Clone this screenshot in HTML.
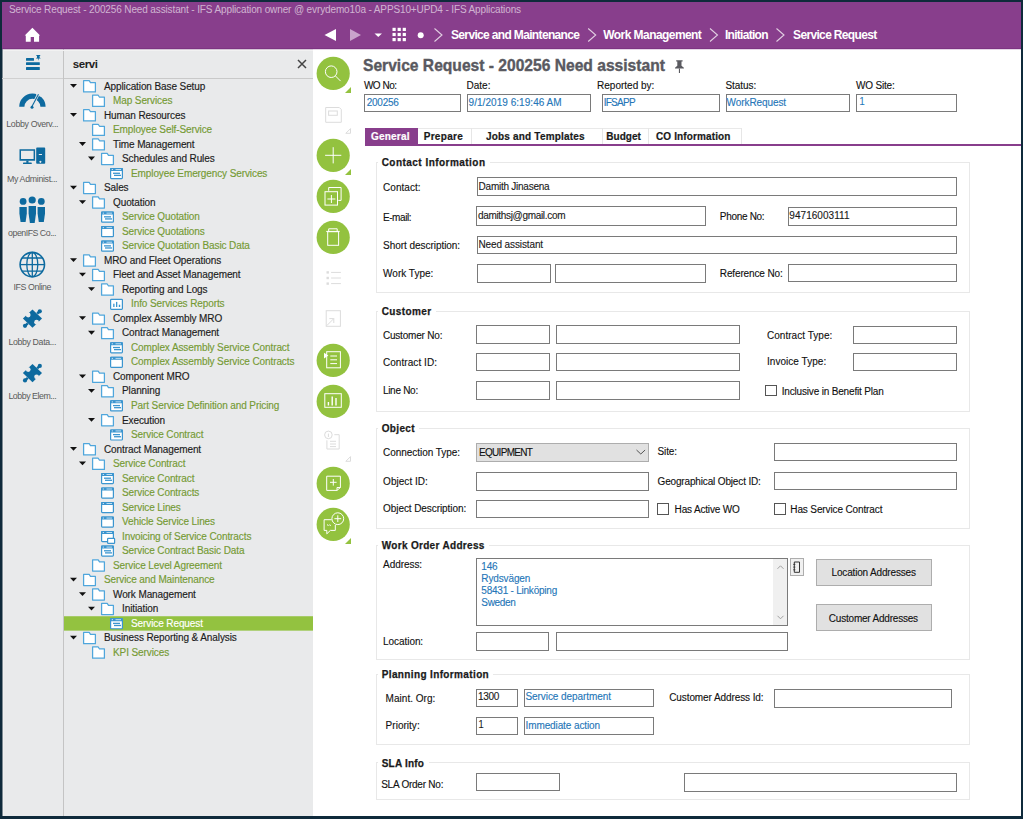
<!DOCTYPE html>
<html><head><meta charset="utf-8"><title>IFS</title>
<style>
html,body{margin:0;padding:0;}
body{width:1023px;height:819px;overflow:hidden;background:#0f2a3b;position:relative;font-family:"Liberation Sans", sans-serif;}
#app{position:absolute;left:2px;top:2px;width:1019px;height:814px;background:#fff;}
.t{position:absolute;white-space:nowrap;}
.r{position:absolute;}
</style></head><body>
<div id="app"></div>
<div class="r" style="left:2px;top:2px;width:1019px;height:47px;background:#883e8c"></div>
<div class="r" style="left:2px;top:48px;width:1019px;height:1px;background:#7d3482"></div>
<div class="t" style="left:9px;top:4.73px;font-size:10px;line-height:10px;color:rgba(255,255,255,0.62);font-weight:normal;letter-spacing:-0.125px;">Service Request - 200256 Need assistant - IFS Application owner @ evrydemo10a - APPS10+UPD4 - IFS Applications</div>
<svg class="r" style="left:0;top:0" width="1023" height="60" viewBox="0 0 1023 60"><path d="M24.7 35.6 L32.4 27.8 L40.1 35.6 L39.1 35.6 L39.1 41.8 L34 41.8 L34 37 L30.7 37 L30.7 41.8 L25.8 41.8 L25.8 35.6 Z" fill="#fff"/><path d="M324.5 35 L336 29 L336 41 Z" fill="#fff"/><path d="M350 29 L361 35 L350 41 Z" fill="#c9a3cc"/><path d="M374.5 33.6 L382 33.6 L378.25 37 Z" fill="#fff"/><rect x="392.5" y="27.8" width="3.2" height="3.2" fill="#fff"/><rect x="392.5" y="32.9" width="3.2" height="3.2" fill="#fff"/><rect x="392.5" y="38.0" width="3.2" height="3.2" fill="#fff"/><rect x="397.6" y="27.8" width="3.2" height="3.2" fill="#fff"/><rect x="397.6" y="32.9" width="3.2" height="3.2" fill="#fff"/><rect x="397.6" y="38.0" width="3.2" height="3.2" fill="#fff"/><rect x="402.7" y="27.8" width="3.2" height="3.2" fill="#fff"/><rect x="402.7" y="32.9" width="3.2" height="3.2" fill="#fff"/><rect x="402.7" y="38.0" width="3.2" height="3.2" fill="#fff"/><circle cx="420.7" cy="35.3" r="3" fill="#fff"/><path d="M434.5 28.5 L442.0 35 L434.5 41.5" fill="none" stroke="rgba(255,255,255,0.75)" stroke-width="1.1"/><path d="M588.2 28.5 L595.7 35 L588.2 41.5" fill="none" stroke="rgba(255,255,255,0.75)" stroke-width="1.1"/><path d="M710 28.5 L717.5 35 L710 41.5" fill="none" stroke="rgba(255,255,255,0.75)" stroke-width="1.1"/><path d="M776.5 28.5 L784.0 35 L776.5 41.5" fill="none" stroke="rgba(255,255,255,0.75)" stroke-width="1.1"/></svg>
<div class="t" style="left:451px;top:29.24px;font-size:12px;line-height:12px;color:#fff;font-weight:bold;letter-spacing:-0.656px;">Service and Maintenance</div>
<div class="t" style="left:603.3px;top:29.24px;font-size:12px;line-height:12px;color:#fff;font-weight:bold;letter-spacing:-0.565px;">Work Management</div>
<div class="t" style="left:725px;top:29.24px;font-size:12px;line-height:12px;color:#fff;font-weight:bold;letter-spacing:-0.720px;">Initiation</div>
<div class="t" style="left:793.1px;top:29.24px;font-size:12px;line-height:12px;color:#fff;font-weight:bold;letter-spacing:-0.666px;">Service Request</div>
<div class="r" style="left:2px;top:49px;width:61px;height:767px;background:#e9eaeb"></div>
<div class="r" style="left:63px;top:49px;width:1px;height:767px;background:#c4c4c4"></div>
<div class="r" style="left:64px;top:49px;width:249px;height:767px;background:#e9eaeb"></div>
<div class="r" style="left:2px;top:50px;width:311px;height:1px;background:#f2f2f2"></div>
<div class="r" style="left:2px;top:49px;width:1px;height:767px;background:#7f8c94"></div>
<div class="r" style="left:3px;top:49px;width:1px;height:767px;background:#efefef"></div>
<div class="r" style="left:2px;top:49px;width:1019px;height:1px;background:rgba(136,62,140,0.22)"></div>
<div class="r" style="left:64px;top:78px;width:249px;height:1px;background:#c9c9c9"></div>
<div class="r" style="left:2px;top:78px;width:61px;height:1px;background:#d0d0d0"></div>
<svg class="r" style="left:0;top:0" width="64" height="420" viewBox="0 0 64 420"><g fill="#0d6a9f"><rect x="26" y="58" width="8" height="2.8" rx="0.5"/><rect x="26" y="62.3" width="13.8" height="2.8" rx="0.5"/><rect x="26" y="67.1" width="13.8" height="2.8" rx="0.5"/><path d="M36.4 54.9 H40.2 V55.9 H39.6 V57.4 L40.8 58.6 H38.8 L38.3 60.8 L37.8 58.6 H35.8 L37 57.4 V55.9 H36.4 Z"/><path d="M19.2 106.8 A13.2 13.2 0 0 1 45.6 106.8 L40.4 106.8 A8 8 0 0 0 24.4 106.8 Z"/><path d="M31.4 107.6 L38.6 93.6" stroke="#e9eaeb" stroke-width="2.6"/><path d="M36.2 94.4 L41.6 96.6" stroke="#e9eaeb" stroke-width="0.9"/><path d="M31.4 107.6 L38.5 94.3" stroke="#0d6a9f" stroke-width="1.1"/><circle cx="32" cy="107.3" r="1.5"/><path fill-rule="evenodd" d="M19.5 149.2 h15.6 v11.5 h-15.6 Z M21 150.8 v8.3 h12.6 v-8.3 Z"/><rect x="26.3" y="160.6" width="2.2" height="2.3"/><rect x="23" y="162.6" width="8.8" height="1.4" rx="0.6"/><path fill-rule="evenodd" d="M37 147.6 h7.4 a0.8 0.8 0 0 1 0.8 0.8 v14.6 a0.8 0.8 0 0 1 -0.8 0.8 h-7.4 a0.8 0.8 0 0 1 -0.8 -0.8 v-14.6 a0.8 0.8 0 0 1 0.8 -0.8 Z M38.8 154.1 v0.9 h3.2 v-0.9 Z M40.4 160.8 a1 1 0 1 0 0.01 0 Z"/><circle cx="23.1" cy="201.4" r="3.4"/><circle cx="32.2" cy="200" r="3.6"/><circle cx="41.3" cy="201.4" r="3.4"/><path d="M19.4 207 h7.4 v6.5 l-1.2 8.5 h-5 l-1.2 -8.5 Z"/><path d="M28.6 206 h7.4 v7.5 l-1.3 9.5 h-4.8 l-1.3 -9.5 Z"/><path d="M37.6 207 h7.4 v6.5 l-1.2 8.5 h-5 l-1.2 -8.5 Z"/></g><g fill="none" stroke="#0d6a9f" stroke-width="1.3"><circle cx="32.3" cy="264.6" r="12.2" stroke-width="1.6"/><ellipse cx="32.3" cy="264.6" rx="5.5" ry="12.2"/><line x1="32.3" y1="252.4" x2="32.3" y2="276.8"/><line x1="20.1" y1="264.6" x2="44.5" y2="264.6"/><path d="M22 258 H42.6 M22 271.2 H42.6"/></g><g transform="translate(0 308.8)" fill="#0d6a9f"><path d="M32.5 0.6 L42 9.7 L32.5 18.9 L22.9 9.7 Z"/><path d="M37.2 4.9 L39.8 2.5 M27.8 14.5 L25 17" stroke="#0d6a9f" stroke-width="2.4"/><circle cx="39.8" cy="2.5" r="2.1"/><circle cx="25" cy="17" r="2.1"/><circle cx="28.2" cy="6.2" r="2.4" fill="#e9eaeb"/><circle cx="36.6" cy="13.4" r="2.4" fill="#e9eaeb"/></g><g transform="translate(0 363.4)" fill="#0d6a9f"><path d="M32.5 0.6 L42 9.7 L32.5 18.9 L22.9 9.7 Z"/><path d="M37.2 4.9 L39.8 2.5 M27.8 14.5 L25 17" stroke="#0d6a9f" stroke-width="2.4"/><circle cx="39.8" cy="2.5" r="2.1"/><circle cx="25" cy="17" r="2.1"/><circle cx="28.2" cy="6.2" r="2.4" fill="#e9eaeb"/><circle cx="36.6" cy="13.4" r="2.4" fill="#e9eaeb"/></g></svg>
<div class="t" style="left:6.3px;top:120.15px;font-size:8.8px;line-height:8.8px;color:#5a5a5a;font-weight:normal;letter-spacing:-0.340px;">Lobby Overv...</div>
<div class="t" style="left:6.9px;top:174.55px;font-size:8.8px;line-height:8.8px;color:#5a5a5a;font-weight:normal;letter-spacing:-0.318px;">My Administ...</div>
<div class="t" style="left:8.1px;top:228.85px;font-size:8.8px;line-height:8.8px;color:#5a5a5a;font-weight:normal;letter-spacing:-0.491px;">openIFS Co...</div>
<div class="t" style="left:13.6px;top:282.85px;font-size:8.8px;line-height:8.8px;color:#5a5a5a;font-weight:normal;letter-spacing:-0.416px;">IFS Online</div>
<div class="t" style="left:8.4px;top:337.85px;font-size:8.8px;line-height:8.8px;color:#5a5a5a;font-weight:normal;letter-spacing:-0.364px;">Lobby Data...</div>
<div class="t" style="left:8.4px;top:391.95px;font-size:8.8px;line-height:8.8px;color:#5a5a5a;font-weight:normal;letter-spacing:-0.454px;">Lobby Elem...</div>
<div class="t" style="left:72.8px;top:58.87px;font-size:11.5px;line-height:11.5px;color:#222;font-weight:bold;letter-spacing:-0.412px;">servi</div>
<svg class="r" style="left:297px;top:59px" width="10" height="10" viewBox="0 0 10 10"><path d="M1 1 L9 9 M9 1 L1 9" stroke="#444" stroke-width="1.5"/></svg>
<svg class="r" style="left:0;top:0" width="320" height="670" viewBox="0 0 320 670"><path d="M70 84.00 h7 l-3.5 3.8 Z" fill="#111"/><path d="M83.6 80.70 H89.2 L90.5 82.70 H95.4 V91.90 H83.6 Z" fill="#fff" stroke="#4fa6dc" stroke-width="1.25" stroke-linejoin="round"/><path d="M92.6 95.22 H98.2 L99.5 97.22 H104.4 V106.42 H92.6 Z" fill="#fff" stroke="#4fa6dc" stroke-width="1.25" stroke-linejoin="round"/><path d="M70 113.04 h7 l-3.5 3.8 Z" fill="#111"/><path d="M83.6 109.74 H89.2 L90.5 111.74 H95.4 V120.94 H83.6 Z" fill="#fff" stroke="#4fa6dc" stroke-width="1.25" stroke-linejoin="round"/><path d="M92.6 124.26 H98.2 L99.5 126.26 H104.4 V135.46 H92.6 Z" fill="#fff" stroke="#4fa6dc" stroke-width="1.25" stroke-linejoin="round"/><path d="M79 142.08 h7 l-3.5 3.8 Z" fill="#111"/><path d="M92.6 138.78 H98.2 L99.5 140.78 H104.4 V149.98 H92.6 Z" fill="#fff" stroke="#4fa6dc" stroke-width="1.25" stroke-linejoin="round"/><path d="M88 156.60 h7 l-3.5 3.8 Z" fill="#111"/><path d="M101.6 153.30 H107.2 L108.5 155.30 H113.4 V164.50 H101.6 Z" fill="#fff" stroke="#4fa6dc" stroke-width="1.25" stroke-linejoin="round"/><rect x="110.6" y="168.62" width="11.8" height="10" rx="0.8" fill="#fff" stroke="#3b95cf" stroke-width="1.2"/><rect x="110" y="168.02" width="13" height="3" rx="0.8" fill="#3b95cf"/><rect x="111.8" y="169.12" width="1" height="0.9" fill="#fff"/><rect x="115.5" y="169.12" width="5.5" height="0.9" fill="#cfe6f5"/><rect x="113" y="172.62" width="7" height="1.3" fill="#3b95cf"/><rect x="114" y="174.72" width="7" height="1.3" fill="#3b95cf"/><path d="M70 185.64 h7 l-3.5 3.8 Z" fill="#111"/><path d="M83.6 182.34 H89.2 L90.5 184.34 H95.4 V193.54 H83.6 Z" fill="#fff" stroke="#4fa6dc" stroke-width="1.25" stroke-linejoin="round"/><path d="M79 200.16 h7 l-3.5 3.8 Z" fill="#111"/><path d="M92.6 196.86 H98.2 L99.5 198.86 H104.4 V208.06 H92.6 Z" fill="#fff" stroke="#4fa6dc" stroke-width="1.25" stroke-linejoin="round"/><rect x="101.6" y="212.18" width="11.8" height="10" rx="0.8" fill="#fff" stroke="#3b95cf" stroke-width="1.2"/><rect x="101" y="211.58" width="13" height="3" rx="0.8" fill="#3b95cf"/><rect x="102.8" y="212.68" width="1" height="0.9" fill="#fff"/><rect x="106.5" y="212.68" width="5.5" height="0.9" fill="#cfe6f5"/><rect x="104" y="216.18" width="7" height="1.3" fill="#3b95cf"/><rect x="105" y="218.28" width="7" height="1.3" fill="#3b95cf"/><rect x="101.6" y="226.70" width="11.8" height="10" rx="0.8" fill="#fff" stroke="#3b95cf" stroke-width="1.2"/><rect x="101" y="226.10" width="13" height="3" rx="0.8" fill="#3b95cf"/><rect x="102.8" y="227.20" width="1" height="0.9" fill="#fff"/><rect x="106.5" y="227.20" width="5.5" height="0.9" fill="#cfe6f5"/><rect x="101.6" y="241.22" width="11.8" height="10" rx="0.8" fill="#fff" stroke="#3b95cf" stroke-width="1.2"/><rect x="101" y="240.62" width="13" height="3" rx="0.8" fill="#3b95cf"/><rect x="102.8" y="241.72" width="1" height="0.9" fill="#fff"/><rect x="106.5" y="241.72" width="5.5" height="0.9" fill="#cfe6f5"/><rect x="104" y="245.22" width="7" height="1.3" fill="#3b95cf"/><rect x="105" y="247.32" width="7" height="1.3" fill="#3b95cf"/><path d="M70 258.24 h7 l-3.5 3.8 Z" fill="#111"/><path d="M83.6 254.94 H89.2 L90.5 256.94 H95.4 V266.14 H83.6 Z" fill="#fff" stroke="#4fa6dc" stroke-width="1.25" stroke-linejoin="round"/><path d="M79 272.76 h7 l-3.5 3.8 Z" fill="#111"/><path d="M92.6 269.46 H98.2 L99.5 271.46 H104.4 V280.66 H92.6 Z" fill="#fff" stroke="#4fa6dc" stroke-width="1.25" stroke-linejoin="round"/><path d="M88 287.28 h7 l-3.5 3.8 Z" fill="#111"/><path d="M101.6 283.98 H107.2 L108.5 285.98 H113.4 V295.18 H101.6 Z" fill="#fff" stroke="#4fa6dc" stroke-width="1.25" stroke-linejoin="round"/><rect x="110.6" y="299.30" width="11.8" height="10" rx="0.8" fill="#fff" stroke="#3b95cf" stroke-width="1.2"/><rect x="113.2" y="303.70" width="1.3" height="3.3" fill="#3b95cf"/><rect x="116" y="301.90" width="1.3" height="5.1" fill="#3b95cf"/><rect x="118.8" y="304.70" width="1.4" height="2.3" fill="#3b95cf"/><path d="M79 316.32 h7 l-3.5 3.8 Z" fill="#111"/><path d="M92.6 313.02 H98.2 L99.5 315.02 H104.4 V324.22 H92.6 Z" fill="#fff" stroke="#4fa6dc" stroke-width="1.25" stroke-linejoin="round"/><path d="M88 330.84 h7 l-3.5 3.8 Z" fill="#111"/><path d="M101.6 327.54 H107.2 L108.5 329.54 H113.4 V338.74 H101.6 Z" fill="#fff" stroke="#4fa6dc" stroke-width="1.25" stroke-linejoin="round"/><rect x="110.6" y="342.86" width="11.8" height="10" rx="0.8" fill="#fff" stroke="#3b95cf" stroke-width="1.2"/><rect x="110" y="342.26" width="13" height="3" rx="0.8" fill="#3b95cf"/><rect x="111.8" y="343.36" width="1" height="0.9" fill="#fff"/><rect x="115.5" y="343.36" width="5.5" height="0.9" fill="#cfe6f5"/><rect x="113" y="346.86" width="7" height="1.3" fill="#3b95cf"/><rect x="114" y="348.96" width="7" height="1.3" fill="#3b95cf"/><rect x="110.6" y="357.38" width="11.8" height="10" rx="0.8" fill="#fff" stroke="#3b95cf" stroke-width="1.2"/><rect x="110" y="356.78" width="13" height="3" rx="0.8" fill="#3b95cf"/><rect x="111.8" y="357.88" width="1" height="0.9" fill="#fff"/><rect x="115.5" y="357.88" width="5.5" height="0.9" fill="#cfe6f5"/><path d="M79 374.40 h7 l-3.5 3.8 Z" fill="#111"/><path d="M92.6 371.10 H98.2 L99.5 373.10 H104.4 V382.30 H92.6 Z" fill="#fff" stroke="#4fa6dc" stroke-width="1.25" stroke-linejoin="round"/><path d="M88 388.92 h7 l-3.5 3.8 Z" fill="#111"/><path d="M101.6 385.62 H107.2 L108.5 387.62 H113.4 V396.82 H101.6 Z" fill="#fff" stroke="#4fa6dc" stroke-width="1.25" stroke-linejoin="round"/><rect x="110.6" y="400.94" width="11.8" height="10" rx="0.8" fill="#fff" stroke="#3b95cf" stroke-width="1.2"/><rect x="110" y="400.34" width="13" height="3" rx="0.8" fill="#3b95cf"/><rect x="111.8" y="401.44" width="1" height="0.9" fill="#fff"/><rect x="115.5" y="401.44" width="5.5" height="0.9" fill="#cfe6f5"/><rect x="113" y="404.94" width="7" height="1.3" fill="#3b95cf"/><rect x="114" y="407.04" width="7" height="1.3" fill="#3b95cf"/><path d="M88 417.96 h7 l-3.5 3.8 Z" fill="#111"/><path d="M101.6 414.66 H107.2 L108.5 416.66 H113.4 V425.86 H101.6 Z" fill="#fff" stroke="#4fa6dc" stroke-width="1.25" stroke-linejoin="round"/><rect x="110.6" y="429.98" width="11.8" height="10" rx="0.8" fill="#fff" stroke="#3b95cf" stroke-width="1.2"/><rect x="110" y="429.38" width="13" height="3" rx="0.8" fill="#3b95cf"/><rect x="111.8" y="430.48" width="1" height="0.9" fill="#fff"/><rect x="115.5" y="430.48" width="5.5" height="0.9" fill="#cfe6f5"/><rect x="113" y="433.98" width="7" height="1.3" fill="#3b95cf"/><rect x="114" y="436.08" width="7" height="1.3" fill="#3b95cf"/><path d="M70 447.00 h7 l-3.5 3.8 Z" fill="#111"/><path d="M83.6 443.70 H89.2 L90.5 445.70 H95.4 V454.90 H83.6 Z" fill="#fff" stroke="#4fa6dc" stroke-width="1.25" stroke-linejoin="round"/><path d="M79 461.52 h7 l-3.5 3.8 Z" fill="#111"/><path d="M92.6 458.22 H98.2 L99.5 460.22 H104.4 V469.42 H92.6 Z" fill="#fff" stroke="#4fa6dc" stroke-width="1.25" stroke-linejoin="round"/><rect x="101.6" y="473.54" width="11.8" height="10" rx="0.8" fill="#fff" stroke="#3b95cf" stroke-width="1.2"/><rect x="101" y="472.94" width="13" height="3" rx="0.8" fill="#3b95cf"/><rect x="102.8" y="474.04" width="1" height="0.9" fill="#fff"/><rect x="106.5" y="474.04" width="5.5" height="0.9" fill="#cfe6f5"/><rect x="104" y="477.54" width="7" height="1.3" fill="#3b95cf"/><rect x="105" y="479.64" width="7" height="1.3" fill="#3b95cf"/><rect x="101.6" y="488.06" width="11.8" height="10" rx="0.8" fill="#fff" stroke="#3b95cf" stroke-width="1.2"/><rect x="101" y="487.46" width="13" height="3" rx="0.8" fill="#3b95cf"/><rect x="102.8" y="488.56" width="1" height="0.9" fill="#fff"/><rect x="106.5" y="488.56" width="5.5" height="0.9" fill="#cfe6f5"/><rect x="101.6" y="502.58" width="11.8" height="10" rx="0.8" fill="#fff" stroke="#3b95cf" stroke-width="1.2"/><rect x="101" y="501.98" width="13" height="3" rx="0.8" fill="#3b95cf"/><rect x="102.8" y="503.08" width="1" height="0.9" fill="#fff"/><rect x="106.5" y="503.08" width="5.5" height="0.9" fill="#cfe6f5"/><rect x="101.6" y="517.10" width="11.8" height="10" rx="0.8" fill="#fff" stroke="#3b95cf" stroke-width="1.2"/><rect x="101" y="516.50" width="13" height="3" rx="0.8" fill="#3b95cf"/><rect x="102.8" y="517.60" width="1" height="0.9" fill="#fff"/><rect x="106.5" y="517.60" width="5.5" height="0.9" fill="#cfe6f5"/><rect x="101.6" y="531.62" width="11.8" height="10" rx="0.8" fill="#fff" stroke="#3b95cf" stroke-width="1.2"/><rect x="101" y="531.02" width="13" height="3" rx="0.8" fill="#3b95cf"/><rect x="102.8" y="532.12" width="1" height="0.9" fill="#fff"/><rect x="106.5" y="532.12" width="5.5" height="0.9" fill="#cfe6f5"/><rect x="107.6" y="538.32" width="7" height="5" rx="0.6" fill="#fff" stroke="#3b95cf" stroke-width="1.2"/><rect x="101.6" y="546.14" width="11.8" height="10" rx="0.8" fill="#fff" stroke="#3b95cf" stroke-width="1.2"/><rect x="101" y="545.54" width="13" height="3" rx="0.8" fill="#3b95cf"/><rect x="102.8" y="546.64" width="1" height="0.9" fill="#fff"/><rect x="106.5" y="546.64" width="5.5" height="0.9" fill="#cfe6f5"/><rect x="104" y="550.14" width="7" height="1.3" fill="#3b95cf"/><rect x="105" y="552.24" width="7" height="1.3" fill="#3b95cf"/><path d="M92.6 559.86 H98.2 L99.5 561.86 H104.4 V571.06 H92.6 Z" fill="#fff" stroke="#4fa6dc" stroke-width="1.25" stroke-linejoin="round"/><path d="M70 577.68 h7 l-3.5 3.8 Z" fill="#111"/><path d="M83.6 574.38 H89.2 L90.5 576.38 H95.4 V585.58 H83.6 Z" fill="#fff" stroke="#4fa6dc" stroke-width="1.25" stroke-linejoin="round"/><path d="M79 592.20 h7 l-3.5 3.8 Z" fill="#111"/><path d="M92.6 588.90 H98.2 L99.5 590.90 H104.4 V600.10 H92.6 Z" fill="#fff" stroke="#4fa6dc" stroke-width="1.25" stroke-linejoin="round"/><path d="M88 606.72 h7 l-3.5 3.8 Z" fill="#111"/><path d="M101.6 603.42 H107.2 L108.5 605.42 H113.4 V614.62 H101.6 Z" fill="#fff" stroke="#4fa6dc" stroke-width="1.25" stroke-linejoin="round"/><rect x="64" y="616.24" width="249" height="14.4" fill="#93c240"/><rect x="110.6" y="618.74" width="11.8" height="10" rx="0.8" fill="#fff" stroke="#3b95cf" stroke-width="1.2"/><rect x="110" y="618.14" width="13" height="3" rx="0.8" fill="#3b95cf"/><rect x="111.8" y="619.24" width="1" height="0.9" fill="#fff"/><rect x="115.5" y="619.24" width="5.5" height="0.9" fill="#cfe6f5"/><rect x="113" y="622.74" width="7" height="1.3" fill="#3b95cf"/><rect x="114" y="624.84" width="7" height="1.3" fill="#3b95cf"/><path d="M70 635.76 h7 l-3.5 3.8 Z" fill="#111"/><path d="M83.6 632.46 H89.2 L90.5 634.46 H95.4 V643.66 H83.6 Z" fill="#fff" stroke="#4fa6dc" stroke-width="1.25" stroke-linejoin="round"/><path d="M92.6 646.98 H98.2 L99.5 648.98 H104.4 V658.18 H92.6 Z" fill="#fff" stroke="#4fa6dc" stroke-width="1.25" stroke-linejoin="round"/></svg>
<div class="t" style="left:104px;top:81.53px;font-size:10px;line-height:10px;color:#1c1c1c;font-weight:normal;letter-spacing:-0.100px;-webkit-text-stroke:0.15px #1c1c1c">Application Base Setup</div>
<div class="t" style="left:113px;top:96.05px;font-size:10px;line-height:10px;color:#759a34;font-weight:normal;letter-spacing:-0.100px;-webkit-text-stroke:0.15px #759a34">Map Services</div>
<div class="t" style="left:104px;top:110.58px;font-size:10px;line-height:10px;color:#1c1c1c;font-weight:normal;letter-spacing:-0.100px;-webkit-text-stroke:0.15px #1c1c1c">Human Resources</div>
<div class="t" style="left:113px;top:125.09px;font-size:10px;line-height:10px;color:#759a34;font-weight:normal;letter-spacing:-0.100px;-webkit-text-stroke:0.15px #759a34">Employee Self-Service</div>
<div class="t" style="left:113px;top:139.62px;font-size:10px;line-height:10px;color:#1c1c1c;font-weight:normal;letter-spacing:-0.100px;-webkit-text-stroke:0.15px #1c1c1c">Time Management</div>
<div class="t" style="left:122px;top:154.14px;font-size:10px;line-height:10px;color:#1c1c1c;font-weight:normal;letter-spacing:-0.100px;-webkit-text-stroke:0.15px #1c1c1c">Schedules and Rules</div>
<div class="t" style="left:131px;top:168.66px;font-size:10px;line-height:10px;color:#759a34;font-weight:normal;letter-spacing:-0.100px;-webkit-text-stroke:0.15px #759a34">Employee Emergency Services</div>
<div class="t" style="left:104px;top:183.18px;font-size:10px;line-height:10px;color:#1c1c1c;font-weight:normal;letter-spacing:-0.100px;-webkit-text-stroke:0.15px #1c1c1c">Sales</div>
<div class="t" style="left:113px;top:197.70px;font-size:10px;line-height:10px;color:#1c1c1c;font-weight:normal;letter-spacing:-0.100px;-webkit-text-stroke:0.15px #1c1c1c">Quotation</div>
<div class="t" style="left:122px;top:212.22px;font-size:10px;line-height:10px;color:#759a34;font-weight:normal;letter-spacing:-0.100px;-webkit-text-stroke:0.15px #759a34">Service Quotation</div>
<div class="t" style="left:122px;top:226.73px;font-size:10px;line-height:10px;color:#759a34;font-weight:normal;letter-spacing:-0.100px;-webkit-text-stroke:0.15px #759a34">Service Quotations</div>
<div class="t" style="left:122px;top:241.26px;font-size:10px;line-height:10px;color:#759a34;font-weight:normal;letter-spacing:-0.100px;-webkit-text-stroke:0.15px #759a34">Service Quotation Basic Data</div>
<div class="t" style="left:104px;top:255.78px;font-size:10px;line-height:10px;color:#1c1c1c;font-weight:normal;letter-spacing:-0.100px;-webkit-text-stroke:0.15px #1c1c1c">MRO and Fleet Operations</div>
<div class="t" style="left:113px;top:270.30px;font-size:10px;line-height:10px;color:#1c1c1c;font-weight:normal;letter-spacing:-0.100px;-webkit-text-stroke:0.15px #1c1c1c">Fleet and Asset Management</div>
<div class="t" style="left:122px;top:284.82px;font-size:10px;line-height:10px;color:#1c1c1c;font-weight:normal;letter-spacing:-0.100px;-webkit-text-stroke:0.15px #1c1c1c">Reporting and Logs</div>
<div class="t" style="left:131px;top:299.34px;font-size:10px;line-height:10px;color:#759a34;font-weight:normal;letter-spacing:-0.100px;-webkit-text-stroke:0.15px #759a34">Info Services Reports</div>
<div class="t" style="left:113px;top:313.86px;font-size:10px;line-height:10px;color:#1c1c1c;font-weight:normal;letter-spacing:-0.100px;-webkit-text-stroke:0.15px #1c1c1c">Complex Assembly MRO</div>
<div class="t" style="left:122px;top:328.38px;font-size:10px;line-height:10px;color:#1c1c1c;font-weight:normal;letter-spacing:-0.100px;-webkit-text-stroke:0.15px #1c1c1c">Contract Management</div>
<div class="t" style="left:131px;top:342.90px;font-size:10px;line-height:10px;color:#759a34;font-weight:normal;letter-spacing:-0.100px;-webkit-text-stroke:0.15px #759a34">Complex Assembly Service Contract</div>
<div class="t" style="left:131px;top:357.42px;font-size:10px;line-height:10px;color:#759a34;font-weight:normal;letter-spacing:-0.100px;-webkit-text-stroke:0.15px #759a34">Complex Assembly Service Contracts</div>
<div class="t" style="left:113px;top:371.94px;font-size:10px;line-height:10px;color:#1c1c1c;font-weight:normal;letter-spacing:-0.100px;-webkit-text-stroke:0.15px #1c1c1c">Component MRO</div>
<div class="t" style="left:122px;top:386.46px;font-size:10px;line-height:10px;color:#1c1c1c;font-weight:normal;letter-spacing:-0.100px;-webkit-text-stroke:0.15px #1c1c1c">Planning</div>
<div class="t" style="left:131px;top:400.98px;font-size:10px;line-height:10px;color:#759a34;font-weight:normal;letter-spacing:-0.100px;-webkit-text-stroke:0.15px #759a34">Part Service Definition and Pricing</div>
<div class="t" style="left:122px;top:415.50px;font-size:10px;line-height:10px;color:#1c1c1c;font-weight:normal;letter-spacing:-0.100px;-webkit-text-stroke:0.15px #1c1c1c">Execution</div>
<div class="t" style="left:131px;top:430.02px;font-size:10px;line-height:10px;color:#759a34;font-weight:normal;letter-spacing:-0.100px;-webkit-text-stroke:0.15px #759a34">Service Contract</div>
<div class="t" style="left:104px;top:444.54px;font-size:10px;line-height:10px;color:#1c1c1c;font-weight:normal;letter-spacing:-0.100px;-webkit-text-stroke:0.15px #1c1c1c">Contract Management</div>
<div class="t" style="left:113px;top:459.06px;font-size:10px;line-height:10px;color:#759a34;font-weight:normal;letter-spacing:-0.100px;-webkit-text-stroke:0.15px #759a34">Service Contract</div>
<div class="t" style="left:122px;top:473.57px;font-size:10px;line-height:10px;color:#759a34;font-weight:normal;letter-spacing:-0.100px;-webkit-text-stroke:0.15px #759a34">Service Contract</div>
<div class="t" style="left:122px;top:488.10px;font-size:10px;line-height:10px;color:#759a34;font-weight:normal;letter-spacing:-0.100px;-webkit-text-stroke:0.15px #759a34">Service Contracts</div>
<div class="t" style="left:122px;top:502.62px;font-size:10px;line-height:10px;color:#759a34;font-weight:normal;letter-spacing:-0.100px;-webkit-text-stroke:0.15px #759a34">Service Lines</div>
<div class="t" style="left:122px;top:517.13px;font-size:10px;line-height:10px;color:#759a34;font-weight:normal;letter-spacing:-0.100px;-webkit-text-stroke:0.15px #759a34">Vehicle Service Lines</div>
<div class="t" style="left:122px;top:531.65px;font-size:10px;line-height:10px;color:#759a34;font-weight:normal;letter-spacing:-0.100px;-webkit-text-stroke:0.15px #759a34">Invoicing of Service Contracts</div>
<div class="t" style="left:122px;top:546.17px;font-size:10px;line-height:10px;color:#759a34;font-weight:normal;letter-spacing:-0.100px;-webkit-text-stroke:0.15px #759a34">Service Contract Basic Data</div>
<div class="t" style="left:113px;top:560.69px;font-size:10px;line-height:10px;color:#759a34;font-weight:normal;letter-spacing:-0.100px;-webkit-text-stroke:0.15px #759a34">Service Level Agreement</div>
<div class="t" style="left:104px;top:575.21px;font-size:10px;line-height:10px;color:#759a34;font-weight:normal;letter-spacing:-0.100px;-webkit-text-stroke:0.15px #759a34">Service and Maintenance</div>
<div class="t" style="left:113px;top:589.73px;font-size:10px;line-height:10px;color:#1c1c1c;font-weight:normal;letter-spacing:-0.100px;-webkit-text-stroke:0.15px #1c1c1c">Work Management</div>
<div class="t" style="left:122px;top:604.25px;font-size:10px;line-height:10px;color:#1c1c1c;font-weight:normal;letter-spacing:-0.100px;-webkit-text-stroke:0.15px #1c1c1c">Initiation</div>
<div class="t" style="left:131px;top:618.77px;font-size:10px;line-height:10px;color:#fff;font-weight:normal;letter-spacing:-0.100px;-webkit-text-stroke:0.15px #fff">Service Request</div>
<div class="t" style="left:104px;top:633.29px;font-size:10px;line-height:10px;color:#1c1c1c;font-weight:normal;letter-spacing:-0.100px;-webkit-text-stroke:0.15px #1c1c1c">Business Reporting &amp; Analysis</div>
<div class="t" style="left:113px;top:647.81px;font-size:10px;line-height:10px;color:#759a34;font-weight:normal;letter-spacing:-0.100px;-webkit-text-stroke:0.15px #759a34">KPI Services</div>
<svg class="r" style="left:300px;top:50px" width="70" height="500" viewBox="300 50 70 500"><circle cx="333.2" cy="73.4" r="16.6" fill="#93c23f"/><circle cx="333.2" cy="155.4" r="16.6" fill="#93c23f"/><circle cx="333.2" cy="196.4" r="16.6" fill="#93c23f"/><circle cx="333.2" cy="237.4" r="16.6" fill="#93c23f"/><circle cx="333.2" cy="360.4" r="16.6" fill="#93c23f"/><circle cx="333.2" cy="401.4" r="16.6" fill="#93c23f"/><circle cx="333.2" cy="483.4" r="16.6" fill="#93c23f"/><circle cx="333.2" cy="524.4" r="16.6" fill="#93c23f"/><path d="M351 87.10000000000001 V92.9 H345 Z" fill="#93c23f"/><path d="M351 169.1 V174.9 H345 Z" fill="#93c23f"/><path d="M351 538.1 V543.9 H345 Z" fill="#93c23f"/><path d="M350.5 128.6 V133.3 H345.8 Z" fill="none" stroke="#dcdcdc" stroke-width="1"/><path d="M350.5 456.59999999999997 V461.29999999999995 H345.8 Z" fill="none" stroke="#dcdcdc" stroke-width="1"/><circle cx="331.2" cy="71.7" r="5.8" fill="none" stroke="#fff" stroke-width="1"/><path d="M335.4 75.9 L340.6 81.1" fill="none" stroke="#fff" stroke-width="1"/><path d="M325.7 107.5 H339.3 L341.3 109.5 V122.3 H325.7 Z" fill="none" stroke="#dcdcdc" stroke-width="1"/><rect x="328.6" y="111" width="8.7" height="4.3" fill="none" stroke="#dcdcdc" stroke-width="1"/><path d="M333.2 147.2 V163.4 M325.1 155.3 H341.3" fill="none" stroke="#fff" stroke-width="1"/><path d="M328.7 190.8 V187.5 H341.1 V200.4 H338.3" fill="none" stroke="#fff" stroke-width="1"/><rect x="325" y="191.7" width="12.5" height="13.4" fill="none" stroke="#fff" stroke-width="1"/><path d="M331.4 195 V203 M327.4 199 H335.4" fill="none" stroke="#fff" stroke-width="1"/><rect x="327.7" y="231.7" width="10.9" height="13.6" fill="none" stroke="#fff" stroke-width="1"/><path d="M326.2 231.4 H339.7 M328.7 231.4 V228.8 H337.2 V231.4" fill="none" stroke="#fff" stroke-width="1"/><g fill="#dcdcdc"><rect x="326.5" y="271.2" width="2.4" height="2.4"/><rect x="326.5" y="276.8" width="2.4" height="2.4"/><rect x="326.5" y="282.4" width="2.4" height="2.4"/></g><path d="M331.1 272.4 H340.9 M331.1 278 H340.9 M331.1 283.6 H340.9" stroke="#dcdcdc" stroke-width="1"/><rect x="326.2" y="310.7" width="14.2" height="15.6" fill="none" stroke="#dcdcdc" stroke-width="1"/><path d="M326.8 325.6 L333.8 318.6 M329.3 318.6 H333.8 V323" fill="none" stroke="#dcdcdc" stroke-width="1"/><rect x="326.7" y="351.7" width="13.7" height="16.1" fill="none" stroke="#fff" stroke-width="1"/><path d="M330.3 356 H337 M330.3 359.8 H337 M330.3 363.6 H337" fill="none" stroke="#fff" stroke-width="1"/><path d="M324 352.8 L328.4 355.6 L324 358.4 Z" fill="#fff"/><rect x="324.8" y="393.7" width="16.5" height="13.6" fill="none" stroke="#fff" stroke-width="1"/><path d="M328.4 402 V405.5 M332.2 396.5 V405.5 M336 398 V405.5" stroke="#fff" stroke-width="1.4"/><g fill="none" stroke="#dcdcdc" stroke-width="1"><circle cx="328.4" cy="434.9" r="3.8"/><path d="M328.4 433.6 V437" /><path d="M334.3 434.7 H339.2 V449 H326.9 V440.3"/><path d="M330 441.3 H336 M330 444 H336 M330 446.6 H336"/></g><path d="M326.7 476.2 H340.4 V487.5 L337 490.4 H326.7 Z" fill="none" stroke="#fff" stroke-width="1"/><path d="M337 490.4 V487.5 H340.4" fill="none" stroke="#fff" stroke-width="1"/><path d="M333.3 479 V485.6 M330 482.3 H336.6" fill="none" stroke="#fff" stroke-width="1"/><circle cx="337.8" cy="518.7" r="5.9" fill="none" stroke="#fff" stroke-width="1"/><path d="M337.8 515.3 V522.1 M334.4 518.7 H341.2" fill="none" stroke="#fff" stroke-width="1"/><path d="M331.6 519.7 H324.1 V530.4 H326.8 V533.8 L330.4 530.4 H335.3 V525" fill="none" stroke="#fff" stroke-width="1"/><path d="M327.5 524.4 l0.8 1.6 M329.7 524.4 l0.8 1.6" stroke="#fff" stroke-width="1"/></svg>
<div class="t" style="left:363.3px;top:57.01px;font-size:17px;line-height:17px;color:#595960;font-weight:bold;letter-spacing:0.000px;transform:scaleX(0.918);transform-origin:0 0;-webkit-text-stroke:0.4px #595960">Service Request - 200256 Need assistant</div>
<svg class="r" style="left:670px;top:56px" width="20" height="22" viewBox="670 56 20 22"><path d="M676.2 60.3 H682.6 V61.6 H681.5 V65.8 L683.9 67.8 V68.6 H675 V67.8 L677.3 65.8 V61.6 H676.2 Z" fill="#5a5a60"/><rect x="678.9" y="68.5" width="1.1" height="4.5" fill="#5a5a60"/></svg>
<div class="t" style="left:363.9px;top:80.73px;font-size:10px;line-height:10px;color:#111;font-weight:normal;letter-spacing:-0.460px;-webkit-text-stroke:0.12px #111">WO No:</div>
<div class="t" style="left:466.4px;top:80.73px;font-size:10px;line-height:10px;color:#111;font-weight:normal;letter-spacing:0.039px;-webkit-text-stroke:0.12px #111">Date:</div>
<div class="t" style="left:597.1px;top:80.73px;font-size:10px;line-height:10px;color:#111;font-weight:normal;letter-spacing:-0.005px;-webkit-text-stroke:0.12px #111">Reported by:</div>
<div class="t" style="left:725.5px;top:80.73px;font-size:10px;line-height:10px;color:#111;font-weight:normal;letter-spacing:-0.049px;-webkit-text-stroke:0.12px #111">Status:</div>
<div class="t" style="left:856.1px;top:80.73px;font-size:10px;line-height:10px;color:#111;font-weight:normal;letter-spacing:-0.189px;-webkit-text-stroke:0.12px #111">WO Site:</div>
<div class="r" style="left:364px;top:94px;width:97px;height:18px;box-sizing:border-box;border:1px solid #7a7a7a;background:#fff"></div>
<div class="t" style="left:366.8px;top:97.94px;font-size:10px;line-height:10px;color:#2576b8;font-weight:normal;letter-spacing:-0.279px;-webkit-text-stroke:0.12px #2576b8">200256</div>
<div class="r" style="left:467px;top:94px;width:124px;height:18px;box-sizing:border-box;border:1px solid #7a7a7a;background:#fff"></div>
<div class="t" style="left:468.6px;top:97.94px;font-size:10px;line-height:10px;color:#2576b8;font-weight:normal;letter-spacing:0.042px;-webkit-text-stroke:0.12px #2576b8">9/1/2019 6:19:46 AM</div>
<div class="r" style="left:602px;top:94px;width:118px;height:18px;box-sizing:border-box;border:1px solid #7a7a7a;background:#fff"></div>
<div class="t" style="left:603.7px;top:97.94px;font-size:10px;line-height:10px;color:#2576b8;font-weight:normal;letter-spacing:-0.730px;-webkit-text-stroke:0.12px #2576b8">IFSAPP</div>
<div class="r" style="left:726px;top:94px;width:124px;height:18px;box-sizing:border-box;border:1px solid #7a7a7a;background:#fff"></div>
<div class="t" style="left:726.6px;top:97.94px;font-size:10px;line-height:10px;color:#2576b8;font-weight:normal;letter-spacing:-0.091px;-webkit-text-stroke:0.12px #2576b8">WorkRequest</div>
<div class="r" style="left:856px;top:94px;width:101px;height:18px;box-sizing:border-box;border:1px solid #7a7a7a;background:#fff"></div>
<div class="t" style="left:859.3px;top:97.23px;font-size:10px;line-height:10px;color:#2576b8;font-weight:normal;letter-spacing:0.000px;">1</div>
<div class="r" style="left:365px;top:128px;width:376px;height:1px;background:#e9e9e9"></div>
<div class="r" style="left:365px;top:144px;width:656px;height:2px;background:#883e8c"></div>
<div class="r" style="left:365px;top:128px;width:53px;height:17px;background:#883e8c"></div>
<div class="r" style="left:471px;top:128px;width:1px;height:16px;background:#e6e6e6"></div>
<div class="r" style="left:602px;top:128px;width:1px;height:16px;background:#e6e6e6"></div>
<div class="r" style="left:648px;top:128px;width:1px;height:16px;background:#e6e6e6"></div>
<div class="r" style="left:741px;top:128px;width:1px;height:16px;background:#e6e6e6"></div>
<div class="t" style="left:371px;top:131.53px;font-size:10px;line-height:10px;color:#fff;font-weight:bold;letter-spacing:0.207px;-webkit-text-stroke:0.2px #fff">General</div>
<div class="t" style="left:423.7px;top:131.53px;font-size:10px;line-height:10px;color:#1a1a1a;font-weight:bold;letter-spacing:0.307px;-webkit-text-stroke:0.2px #1a1a1a">Prepare</div>
<div class="t" style="left:485.9px;top:131.53px;font-size:10px;line-height:10px;color:#1a1a1a;font-weight:bold;letter-spacing:0.200px;-webkit-text-stroke:0.2px #1a1a1a">Jobs and Templates</div>
<div class="t" style="left:606.3px;top:131.53px;font-size:10px;line-height:10px;color:#1a1a1a;font-weight:bold;letter-spacing:0.041px;-webkit-text-stroke:0.2px #1a1a1a">Budget</div>
<div class="t" style="left:656px;top:131.53px;font-size:10px;line-height:10px;color:#1a1a1a;font-weight:bold;letter-spacing:0.123px;-webkit-text-stroke:0.2px #1a1a1a">CO Information</div>
<div class="r" style="left:376px;top:161.5px;width:593.5px;height:131.5px;box-sizing:border-box;border:1px solid #e8e8e8"></div>
<div class="r" style="left:378px;top:160.5px;width:111.8px;height:3px;background:#fff"></div>
<div class="t" style="left:381.7px;top:158.14px;font-size:10px;line-height:10px;color:#1a1a1a;font-weight:bold;letter-spacing:0.463px;-webkit-text-stroke:0.25px #1a1a1a">Contact Information</div>
<div class="t" style="left:383.1px;top:182.63px;font-size:10px;line-height:10px;color:#111;font-weight:normal;letter-spacing:0.031px;-webkit-text-stroke:0.12px #111">Contact:</div>
<div class="r" style="left:477px;top:177px;width:480px;height:19px;box-sizing:border-box;border:1px solid #7a7a7a;background:#fff"></div>
<div class="t" style="left:478.6px;top:181.73px;font-size:10px;line-height:10px;color:#1a1a1a;font-weight:normal;letter-spacing:-0.246px;-webkit-text-stroke:0.12px #1a1a1a">Damith Jinasena</div>
<div class="t" style="left:382.9px;top:213.23px;font-size:10px;line-height:10px;color:#111;font-weight:normal;letter-spacing:-0.404px;-webkit-text-stroke:0.12px #111">E-mail:</div>
<div class="r" style="left:476px;top:206px;width:230px;height:20px;box-sizing:border-box;border:1px solid #7a7a7a;background:#fff"></div>
<div class="t" style="left:477.9px;top:210.63px;font-size:10px;line-height:10px;color:#1a1a1a;font-weight:normal;letter-spacing:-0.315px;-webkit-text-stroke:0.12px #1a1a1a">damithsj@gmail.com</div>
<div class="t" style="left:719.8px;top:211.73px;font-size:10px;line-height:10px;color:#111;font-weight:normal;letter-spacing:-0.307px;-webkit-text-stroke:0.12px #111">Phone No:</div>
<div class="r" style="left:788px;top:207px;width:169px;height:19px;box-sizing:border-box;border:1px solid #7a7a7a;background:#fff"></div>
<div class="t" style="left:789.3px;top:210.63px;font-size:10px;line-height:10px;color:#1a1a1a;font-weight:normal;letter-spacing:0.054px;-webkit-text-stroke:0.12px #1a1a1a">94716003111</div>
<div class="t" style="left:383.1px;top:240.93px;font-size:10px;line-height:10px;color:#111;font-weight:normal;letter-spacing:-0.046px;-webkit-text-stroke:0.12px #111">Short description:</div>
<div class="r" style="left:477px;top:236px;width:480px;height:18px;box-sizing:border-box;border:1px solid #7a7a7a;background:#fff"></div>
<div class="t" style="left:478.5px;top:239.83px;font-size:10px;line-height:10px;color:#1a1a1a;font-weight:normal;letter-spacing:-0.118px;-webkit-text-stroke:0.12px #1a1a1a">Need assistant</div>
<div class="t" style="left:383.1px;top:268.63px;font-size:10px;line-height:10px;color:#111;font-weight:normal;letter-spacing:-0.002px;-webkit-text-stroke:0.12px #111">Work Type:</div>
<div class="r" style="left:477px;top:264px;width:74px;height:19px;box-sizing:border-box;border:1px solid #7a7a7a;background:#fff"></div>
<div class="r" style="left:555px;top:264px;width:151px;height:19px;box-sizing:border-box;border:1px solid #7a7a7a;background:#fff"></div>
<div class="t" style="left:719.8px;top:268.63px;font-size:10px;line-height:10px;color:#111;font-weight:normal;letter-spacing:-0.130px;-webkit-text-stroke:0.12px #111">Reference No:</div>
<div class="r" style="left:788px;top:264px;width:169px;height:18px;box-sizing:border-box;border:1px solid #7a7a7a;background:#fff"></div>
<div class="r" style="left:376px;top:310.5px;width:593.5px;height:101.5px;box-sizing:border-box;border:1px solid #e8e8e8"></div>
<div class="r" style="left:378px;top:309.5px;width:57.9px;height:3px;background:#fff"></div>
<div class="t" style="left:381.7px;top:307.34px;font-size:10px;line-height:10px;color:#1a1a1a;font-weight:bold;letter-spacing:0.402px;-webkit-text-stroke:0.25px #1a1a1a">Customer</div>
<div class="t" style="left:382.9px;top:330.74px;font-size:10px;line-height:10px;color:#111;font-weight:normal;letter-spacing:-0.191px;-webkit-text-stroke:0.12px #111">Customer No:</div>
<div class="r" style="left:476px;top:325px;width:74px;height:19px;box-sizing:border-box;border:1px solid #7a7a7a;background:#fff"></div>
<div class="r" style="left:556px;top:325px;width:184px;height:19px;box-sizing:border-box;border:1px solid #7a7a7a;background:#fff"></div>
<div class="t" style="left:382.9px;top:357.54px;font-size:10px;line-height:10px;color:#111;font-weight:normal;letter-spacing:0.070px;-webkit-text-stroke:0.12px #111">Contract ID:</div>
<div class="r" style="left:476px;top:353px;width:74px;height:18px;box-sizing:border-box;border:1px solid #7a7a7a;background:#fff"></div>
<div class="r" style="left:556px;top:353px;width:184px;height:18px;box-sizing:border-box;border:1px solid #7a7a7a;background:#fff"></div>
<div class="t" style="left:382.9px;top:385.63px;font-size:10px;line-height:10px;color:#111;font-weight:normal;letter-spacing:-0.281px;-webkit-text-stroke:0.12px #111">Line No:</div>
<div class="r" style="left:476px;top:381px;width:74px;height:19px;box-sizing:border-box;border:1px solid #7a7a7a;background:#fff"></div>
<div class="r" style="left:556px;top:381px;width:184px;height:19px;box-sizing:border-box;border:1px solid #7a7a7a;background:#fff"></div>
<div class="t" style="left:767px;top:330.74px;font-size:10px;line-height:10px;color:#111;font-weight:normal;letter-spacing:0.031px;-webkit-text-stroke:0.12px #111">Contract Type:</div>
<div class="r" style="left:853px;top:326px;width:104px;height:18px;box-sizing:border-box;border:1px solid #7a7a7a;background:#fff"></div>
<div class="t" style="left:767px;top:357.44px;font-size:10px;line-height:10px;color:#111;font-weight:normal;letter-spacing:0.035px;-webkit-text-stroke:0.12px #111">Invoice Type:</div>
<div class="r" style="left:853px;top:353px;width:104px;height:18px;box-sizing:border-box;border:1px solid #7a7a7a;background:#fff"></div>
<div class="r" style="left:765px;top:385px;width:12px;height:11px;box-sizing:border-box;border:1px solid #555;background:#fff"></div>
<div class="t" style="left:781.7px;top:386.84px;font-size:10px;line-height:10px;color:#111;font-weight:normal;letter-spacing:-0.171px;-webkit-text-stroke:0.12px #111">Inclusive in Benefit Plan</div>
<div class="r" style="left:376px;top:428px;width:593.5px;height:100.60000000000002px;box-sizing:border-box;border:1px solid #e8e8e8"></div>
<div class="r" style="left:378px;top:427px;width:41.2px;height:3px;background:#fff"></div>
<div class="t" style="left:381.7px;top:423.94px;font-size:10px;line-height:10px;color:#1a1a1a;font-weight:bold;letter-spacing:0.346px;-webkit-text-stroke:0.25px #1a1a1a">Object</div>
<div class="t" style="left:383.1px;top:447.63px;font-size:10px;line-height:10px;color:#111;font-weight:normal;letter-spacing:-0.054px;-webkit-text-stroke:0.12px #111">Connection Type:</div>
<div class="r" style="left:476px;top:443px;width:173px;height:19px;box-sizing:border-box;border:1px solid #adadad;background:#e1e1e1"></div>
<div class="t" style="left:479px;top:447.54px;font-size:10px;line-height:10px;color:#111;font-weight:normal;letter-spacing:-0.695px;-webkit-text-stroke:0.12px #111">EQUIPMENT</div>
<svg class="r" style="left:636px;top:448px" width="10" height="8" viewBox="0 0 10 8"><path d="M0.5 2 L4.8 6 L9.1 2" fill="none" stroke="#555" stroke-width="1"/></svg>
<div class="t" style="left:657.5px;top:447.44px;font-size:10px;line-height:10px;color:#111;font-weight:normal;letter-spacing:-0.103px;-webkit-text-stroke:0.12px #111">Site:</div>
<div class="r" style="left:774px;top:443px;width:183px;height:18px;box-sizing:border-box;border:1px solid #7a7a7a;background:#fff"></div>
<div class="t" style="left:383.1px;top:476.63px;font-size:10px;line-height:10px;color:#111;font-weight:normal;letter-spacing:0.033px;-webkit-text-stroke:0.12px #111">Object ID:</div>
<div class="r" style="left:476px;top:472px;width:173px;height:19px;box-sizing:border-box;border:1px solid #7a7a7a;background:#fff"></div>
<div class="t" style="left:657.5px;top:476.84px;font-size:10px;line-height:10px;color:#111;font-weight:normal;letter-spacing:-0.153px;-webkit-text-stroke:0.12px #111">Geographical Object ID:</div>
<div class="r" style="left:774px;top:472px;width:183px;height:18px;box-sizing:border-box;border:1px solid #7a7a7a;background:#fff"></div>
<div class="t" style="left:383.1px;top:503.63px;font-size:10px;line-height:10px;color:#111;font-weight:normal;letter-spacing:-0.078px;-webkit-text-stroke:0.12px #111">Object Description:</div>
<div class="r" style="left:476px;top:500px;width:173px;height:18px;box-sizing:border-box;border:1px solid #7a7a7a;background:#fff"></div>
<div class="r" style="left:657px;top:503px;width:12px;height:12px;box-sizing:border-box;border:1px solid #555;background:#fff"></div>
<div class="t" style="left:674.6px;top:505.44px;font-size:10px;line-height:10px;color:#111;font-weight:normal;letter-spacing:-0.173px;-webkit-text-stroke:0.12px #111">Has Active WO</div>
<div class="r" style="left:774px;top:503px;width:12px;height:12px;box-sizing:border-box;border:1px solid #555;background:#fff"></div>
<div class="t" style="left:790.3px;top:505.44px;font-size:10px;line-height:10px;color:#111;font-weight:normal;letter-spacing:-0.124px;-webkit-text-stroke:0.12px #111">Has Service Contract</div>
<div class="r" style="left:376px;top:545px;width:593.5px;height:114.5px;box-sizing:border-box;border:1px solid #e8e8e8"></div>
<div class="r" style="left:378px;top:544px;width:111px;height:3px;background:#fff"></div>
<div class="t" style="left:381.7px;top:540.63px;font-size:10px;line-height:10px;color:#1a1a1a;font-weight:bold;letter-spacing:0.319px;-webkit-text-stroke:0.25px #1a1a1a">Work Order Address</div>
<div class="t" style="left:383.1px;top:559.84px;font-size:10px;line-height:10px;color:#111;font-weight:normal;letter-spacing:-0.059px;-webkit-text-stroke:0.12px #111">Address:</div>
<div class="r" style="left:476px;top:558px;width:312px;height:68px;box-sizing:border-box;border:1px solid #7a7a7a;background:#fff"></div>
<div class="r" style="left:773.3px;top:559.3px;width:14.2px;height:66px;background:#f0f0f0"></div>
<svg class="r" style="left:773px;top:559px" width="16" height="67" viewBox="773 559 16 67"><path d="M777.5 568.8 L780.5 565.8 L783.5 568.8 M777.5 615.8 L780.5 618.8 L783.5 615.8" fill="none" stroke="#a0a0a0" stroke-width="1"/></svg>
<div class="t" style="left:481.3px;top:562.13px;font-size:10px;line-height:10px;color:#2576b8;font-weight:normal;letter-spacing:-0.229px;-webkit-text-stroke:0.12px #2576b8">146</div>
<div class="t" style="left:481.3px;top:574.09px;font-size:10px;line-height:10px;color:#2576b8;font-weight:normal;letter-spacing:-0.126px;-webkit-text-stroke:0.12px #2576b8">Rydsvägen</div>
<div class="t" style="left:481.3px;top:586.03px;font-size:10px;line-height:10px;color:#2576b8;font-weight:normal;letter-spacing:-0.224px;-webkit-text-stroke:0.12px #2576b8">58431 - Linköping</div>
<div class="t" style="left:481.3px;top:597.99px;font-size:10px;line-height:10px;color:#2576b8;font-weight:normal;letter-spacing:-0.323px;-webkit-text-stroke:0.12px #2576b8">Sweden</div>
<div class="r" style="left:790px;top:558px;width:14px;height:18px;box-sizing:border-box;border:1px solid #adadad;background:#f0f0f0"></div>
<svg class="r" style="left:790px;top:558px" width="14" height="18" viewBox="790 558 14 18"><path d="M794.3 562 H799.5 V572.3 H794.3 Z" fill="none" stroke="#333" stroke-width="1"/><path d="M793.3 564.4 h2 M793.3 567.1 h2 M793.3 569.8 h2" stroke="#333" stroke-width="1"/></svg>
<div class="r" style="left:816px;top:559px;width:116px;height:27px;box-sizing:border-box;border:1px solid #adadad;background:#e1e1e1"></div>
<div class="t" style="left:831.5px;top:568.13px;font-size:10px;line-height:10px;color:#111;font-weight:normal;letter-spacing:-0.166px;-webkit-text-stroke:0.12px #111">Location Addresses</div>
<div class="r" style="left:816px;top:604px;width:116px;height:27px;box-sizing:border-box;border:1px solid #adadad;background:#e1e1e1"></div>
<div class="t" style="left:828.8px;top:613.63px;font-size:10px;line-height:10px;color:#111;font-weight:normal;letter-spacing:-0.207px;-webkit-text-stroke:0.12px #111">Customer Addresses</div>
<div class="t" style="left:383.1px;top:636.94px;font-size:10px;line-height:10px;color:#111;font-weight:normal;letter-spacing:-0.066px;-webkit-text-stroke:0.12px #111">Location:</div>
<div class="r" style="left:476px;top:632px;width:73px;height:19px;box-sizing:border-box;border:1px solid #7a7a7a;background:#fff"></div>
<div class="r" style="left:556px;top:632px;width:232px;height:19px;box-sizing:border-box;border:1px solid #7a7a7a;background:#fff"></div>
<div class="r" style="left:376px;top:673.6px;width:593.5px;height:71.19999999999993px;box-sizing:border-box;border:1px solid #e8e8e8"></div>
<div class="r" style="left:378px;top:672.6px;width:115.4px;height:3px;background:#fff"></div>
<div class="t" style="left:381.7px;top:669.63px;font-size:10px;line-height:10px;color:#1a1a1a;font-weight:bold;letter-spacing:0.370px;-webkit-text-stroke:0.25px #1a1a1a">Planning Information</div>
<div class="t" style="left:385.6px;top:693.74px;font-size:10px;line-height:10px;color:#111;font-weight:normal;letter-spacing:0.030px;-webkit-text-stroke:0.12px #111">Maint. Org:</div>
<div class="r" style="left:476px;top:689px;width:42px;height:18px;box-sizing:border-box;border:1px solid #7a7a7a;background:#fff"></div>
<div class="t" style="left:478px;top:692.44px;font-size:10px;line-height:10px;color:#1a1a1a;font-weight:normal;letter-spacing:-0.338px;-webkit-text-stroke:0.12px #1a1a1a">1300</div>
<div class="r" style="left:524px;top:689px;width:130px;height:18px;box-sizing:border-box;border:1px solid #7a7a7a;background:#fff"></div>
<div class="t" style="left:525.5px;top:692.44px;font-size:10px;line-height:10px;color:#2576b8;font-weight:normal;letter-spacing:-0.073px;-webkit-text-stroke:0.12px #2576b8">Service department</div>
<div class="t" style="left:669.2px;top:693.44px;font-size:10px;line-height:10px;color:#111;font-weight:normal;letter-spacing:-0.093px;-webkit-text-stroke:0.12px #111">Customer Address Id:</div>
<div class="r" style="left:774px;top:689px;width:178px;height:19px;box-sizing:border-box;border:1px solid #7a7a7a;background:#fff"></div>
<div class="t" style="left:385.6px;top:721.34px;font-size:10px;line-height:10px;color:#111;font-weight:normal;letter-spacing:0.022px;-webkit-text-stroke:0.12px #111">Priority:</div>
<div class="r" style="left:476px;top:717px;width:42px;height:18px;box-sizing:border-box;border:1px solid #7a7a7a;background:#fff"></div>
<div class="t" style="left:478.3px;top:719.83px;font-size:10px;line-height:10px;color:#1a1a1a;font-weight:normal;letter-spacing:0.000px;">1</div>
<div class="r" style="left:524px;top:717px;width:130px;height:18px;box-sizing:border-box;border:1px solid #7a7a7a;background:#fff"></div>
<div class="t" style="left:525.5px;top:720.53px;font-size:10px;line-height:10px;color:#2576b8;font-weight:normal;letter-spacing:-0.104px;-webkit-text-stroke:0.12px #2576b8">Immediate action</div>
<div class="r" style="left:376px;top:762.4px;width:593.5px;height:37.60000000000002px;box-sizing:border-box;border:1px solid #e8e8e8"></div>
<div class="r" style="left:378px;top:761.4px;width:50.5px;height:3px;background:#fff"></div>
<div class="t" style="left:381.7px;top:758.83px;font-size:10px;line-height:10px;color:#1a1a1a;font-weight:bold;letter-spacing:0.221px;-webkit-text-stroke:0.25px #1a1a1a">SLA Info</div>
<div class="t" style="left:381.2px;top:780.03px;font-size:10px;line-height:10px;color:#111;font-weight:normal;letter-spacing:-0.233px;-webkit-text-stroke:0.12px #111">SLA Order No:</div>
<div class="r" style="left:476px;top:773px;width:84px;height:18px;box-sizing:border-box;border:1px solid #7a7a7a;background:#fff"></div>
<div class="r" style="left:684px;top:773px;width:273px;height:19px;box-sizing:border-box;border:1px solid #7a7a7a;background:#fff"></div>
</body></html>
